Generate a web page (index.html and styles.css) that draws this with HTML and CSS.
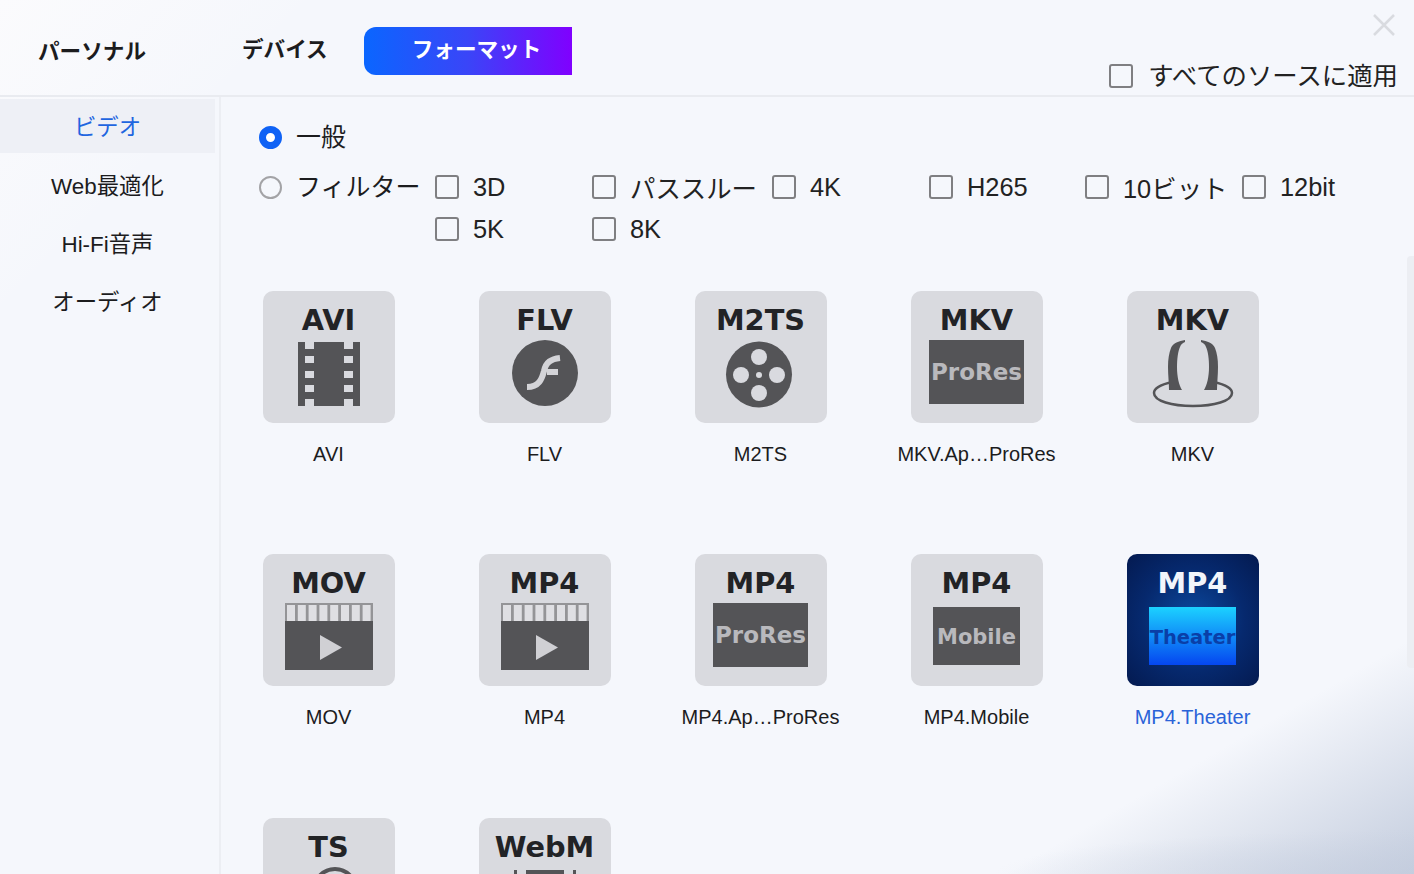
FILE: index.html
```html
<!DOCTYPE html>
<html lang="ja">
<head>
  <meta charset="UTF-8" />
  <meta name="viewport" content="width=device-width, initial-scale=1.0"/>
  <title>フォーマット</title>
  <link rel="stylesheet" href="styles.css">
</head>
<body>
  <div class="app">
    <header class="top">
      <div class="tab tab-personal">パーソナル</div>
      <div class="tab tab-device">デバイス</div>
      <div class="tab tab-format">フォーマット</div>
      <label class="apply-all"><span class="box"></span>すべてのソースに適用</label>
      <svg class="close" width="22" height="22" viewBox="0 0 22 22"><path d="M1 1 L21 21 M21 1 L1 21"/></svg>
    </header>

    <div class="content">
      <nav class="side">
        <div class="side-item active">ビデオ</div>
        <div class="side-item">Web最適化</div>
        <div class="side-item">Hi-Fi音声</div>
        <div class="side-item">オーディオ</div>
      </nav>

      <main class="main">
        <section class="options">
          <div class="radio-row first">
            <span class="radio on"></span>一般
          </div>
          <div class="filter-row">
            <div class="radio-row filter-label">
              <span class="radio"></span>フィルター
            </div>
            <div class="checks">
              <label class="check"><span class="box"></span>3D</label>
              <label class="check"><span class="box"></span>パススルー</label>
              <label class="check"><span class="box"></span>4K</label>
              <label class="check"><span class="box"></span>H265</label>
              <label class="check"><span class="box"></span>10ビット</label>
              <label class="check"><span class="box"></span>12bit</label>
              <label class="check"><span class="box"></span>5K</label>
              <label class="check"><span class="box"></span>8K</label>
            </div>
          </div>
        </section>

        <section class="formats">
          <div class="format">
            <div class="tile">
              <div class="tile-name">AVI</div>
              <svg class="glyph" viewBox="0 49 132 83">
                <rect class="dark" x="35" y="51" width="62" height="64"/>
                <g class="hole">
                  <rect x="42" y="51" width="9" height="7"/><rect x="42" y="65" width="9" height="7"/><rect x="42" y="80" width="9" height="7"/><rect x="42" y="94" width="9" height="7"/><rect x="42" y="108" width="9" height="7"/>
                  <rect x="81" y="51" width="9" height="7"/><rect x="81" y="65" width="9" height="7"/><rect x="81" y="80" width="9" height="7"/><rect x="81" y="94" width="9" height="7"/><rect x="81" y="108" width="9" height="7"/>
                </g>
              </svg>
            </div>
            <div class="format-label">AVI</div>
          </div>

          <div class="format">
            <div class="tile">
              <div class="tile-name">FLV</div>
              <svg class="glyph" viewBox="0 49 132 83">
                <circle class="dark" cx="66" cy="82" r="33"/>
                <path class="flash" d="M48 96 C60 96 63 88 65 80 C67 71 72 68 81 67 M68 81 L79 81"/>
              </svg>
            </div>
            <div class="format-label">FLV</div>
          </div>

          <div class="format">
            <div class="tile">
              <div class="tile-name">M2TS</div>
              <svg class="glyph" viewBox="0 49 132 83">
                <circle class="dark" cx="64" cy="83.500" r="33"/>
                <g class="hole">
                  <circle cx="64" cy="66" r="8"/><circle cx="64" cy="102" r="8"/><circle cx="46" cy="84" r="8"/><circle cx="82" cy="84" r="8"/><circle cx="64" cy="84" r="3"/>
                </g>
              </svg>
            </div>
            <div class="format-label">M2TS</div>
          </div>

          <div class="format">
            <div class="tile">
              <div class="tile-name">MKV</div>
              <svg class="glyph" viewBox="0 49 132 83">
                <rect class="dark" x="18" y="49" width="95" height="64"/>
                <text class="glyph-text" x="65.500" y="89" font-size="23">ProRes</text>
              </svg>
            </div>
            <div class="format-label">MKV.Ap…ProRes</div>
          </div>

          <div class="format">
            <div class="tile">
              <div class="tile-name">MKV</div>
              <svg class="glyph" viewBox="0 49 132 83">
                <path class="ring" d="M45 91 C32 94 27 98 27 102 C27 110 45 115 66 115 C87 115 105 110 105 102 C105 98 100 94 87 91"/>
                <path class="dark" d="M58 49 C52 50 46 52 44 57 C42 62 41 68 41 76 C41 84 42 92 42 99 L55 99 C52 94 50 86 50 76 C50 68 51 60 53 56 C54 53 56 52 58 51 Z"/>
                <path class="dark" d="M74 49 C80 50 86 52 88 57 C90 62 91 68 91 76 C91 84 90 92 90 99 L77 99 C80 94 82 86 82 76 C82 68 81 60 79 56 C78 53 76 52 74 51 Z"/>
              </svg>
            </div>
            <div class="format-label">MKV</div>
          </div>

          <div class="format">
            <div class="tile">
              <div class="tile-name">MOV</div>
              <svg class="glyph" viewBox="0 49 132 83">
                <rect class="dark" x="22" y="49" width="88" height="67"/>
                <rect class="strip-bg" x="22" y="49" width="88" height="18"/>
                <line class="strip" x1="24" y1="59" x2="108" y2="59"/>
                <polygon class="play" points="57,81 79,93.500 57,106"/>
              </svg>
            </div>
            <div class="format-label">MOV</div>
          </div>

          <div class="format">
            <div class="tile">
              <div class="tile-name">MP4</div>
              <svg class="glyph" viewBox="0 49 132 83">
                <rect class="dark" x="22" y="49" width="88" height="67"/>
                <rect class="strip-bg" x="22" y="49" width="88" height="18"/>
                <line class="strip" x1="24" y1="59" x2="108" y2="59"/>
                <polygon class="play" points="57,81 79,93.500 57,106"/>
              </svg>
            </div>
            <div class="format-label">MP4</div>
          </div>

          <div class="format">
            <div class="tile">
              <div class="tile-name">MP4</div>
              <svg class="glyph" viewBox="0 49 132 83">
                <rect class="dark" x="18" y="49" width="95" height="64"/>
                <text class="glyph-text" x="65.500" y="89" font-size="23">ProRes</text>
              </svg>
            </div>
            <div class="format-label">MP4.Ap…ProRes</div>
          </div>

          <div class="format">
            <div class="tile">
              <div class="tile-name">MP4</div>
              <svg class="glyph" viewBox="0 49 132 83">
                <rect class="dark" x="22" y="53" width="87" height="58"/>
                <text class="glyph-text" x="65.500" y="90" font-size="21">Mobile</text>
              </svg>
            </div>
            <div class="format-label">MP4.Mobile</div>
          </div>

          <div class="format selected">
            <div class="tile">
              <div class="tile-name">MP4</div>
              <svg class="glyph" viewBox="0 49 132 83">
                <defs>
                  <linearGradient id="theaterFill" x1="0" y1="0" x2="0" y2="1">
                    <stop offset="0" stop-color="#1cd2ff"/>
                    <stop offset="1" stop-color="#0546f0"/>
                  </linearGradient>
                </defs>
                <rect fill="url(#theaterFill)" x="22" y="53" width="87" height="58"/>
                <text class="glyph-text theater" x="65.500" y="90" font-size="19.500">Theater</text>
              </svg>
            </div>
            <div class="format-label">MP4.Theater</div>
          </div>

          <div class="format">
            <div class="tile">
              <div class="tile-name">TS</div>
              <svg class="glyph" viewBox="0 49 132 83">
                <circle class="ring thick" cx="72" cy="72" r="21"/>
              </svg>
            </div>
          </div>

          <div class="format">
            <div class="tile">
              <div class="tile-name">WebM</div>
              <svg class="glyph" viewBox="0 49 132 83">
                <rect class="dark" x="35" y="52" width="62" height="64"/>
                <g class="hole">
                  <rect x="38" y="52" width="9" height="7"/><rect x="85" y="52" width="9" height="7"/>
                </g>
              </svg>
            </div>
          </div>
        </section>
      </main>
    </div>
  </div>
  <div class="scrollbar"></div>
</body>
</html>
```

FILE: styles.css
```css
* {
  box-sizing: border-box;
}
html, body {
  margin: 0;
  height: 100%;
  overflow: hidden;
}
body {
  font-family: "Liberation Sans", "Noto Sans CJK JP", sans-serif;
  color: #1c1c1e;
  background:
    radial-gradient(ellipse 420px 44px at 100% 100%, rgba(196,205,222,0.5), rgba(196,205,222,0)),
    linear-gradient(150deg, rgba(198,207,223,0) 86%, #c4cdde 100%),
    linear-gradient(135deg, #fbfbfd 0, rgba(251,251,253,0) 14%),
    #f5f7fc;
}
.app {
  display: flex;
  flex-direction: column;
  height: 874px;
  overflow: hidden;
}

/* top bar */
.top {
  position: relative;
  display: flex;
  align-items: flex-start;
  flex: none;
  height: 97px;
  padding-left: 38px;
  border-bottom: 2px solid #e9ebf0;
}
.tab {
  font-size: 21.600px;
  font-weight: 700;
  color: #1c1c1e;
  line-height: 32px;
}
.tab-personal {
  margin-top: 36px;
}
.tab-device {
  margin-top: 34px;
  margin-left: 96px;
}
.tab-format {
  margin-top: 27px;
  margin-left: 36px;
  width: 208px;
  height: 48px;
  padding-left: 48px;
  line-height: 46px;
  color: #fff;
  border-radius: 12px 0 0 12px;
  background: linear-gradient(90deg, #0a66ff 0%, #3a45f8 50%, #8000ff 100%);
}
.apply-all {
  display: flex;
  align-items: center;
  gap: 15px;
  margin-left: auto;
  margin-top: 60px;
  margin-right: 16px;
  font-size: 25.400px;
  line-height: 32px;
  color: #222;
}
.close {
  position: absolute;
  top: 14px;
  right: 19px;
}
.close path {
  fill: none;
  stroke: #d9dbe0;
  stroke-width: 2.500;
}
.box {
  flex: none;
  width: 24px;
  height: 24px;
  border: 2px solid #7f7f82;
  border-radius: 3px;
}

/* left menu */
.content {
  display: flex;
  flex: 1;
  min-height: 0;
}
.side {
  flex: none;
  width: 221px;
  padding: 2px 4px 0 0;
  border-right: 2px solid #eceef3;
  display: flex;
  flex-direction: column;
  gap: 4px;
}
.side-item {
  height: 54px;
  line-height: 56px;
  text-align: center;
  font-size: 22.400px;
  color: #1c1c1e;
}
.side-item.active {
  margin-bottom: 2px;
  line-height: 58px;
  color: #1f66e0;
  background: #eef0f6;
}

/* radio and checkbox options */
.main {
  flex: 1;
  min-width: 0;
}
.options {
  padding: 20px 0 0 38px;
}
.radio-row {
  display: flex;
  align-items: center;
  gap: 14px;
  height: 40px;
  font-size: 25px;
  line-height: 38px;
}
.radio {
  flex: none;
  width: 23px;
  height: 23px;
  border: 2px solid #a3a3a6;
  border-radius: 50%;
}
.radio.on {
  border: 7px solid #0f62f5;
  background: #fff;
}
.filter-row {
  display: flex;
  margin-top: 9px;
}
.filter-label {
  width: 176px;
  height: 42px;
  align-self: flex-start;
}
.checks {
  display: grid;
  grid-template-columns: 157px 180px 157px 156px 157px auto;
  grid-auto-rows: 42px;
}
.check {
  display: flex;
  align-items: center;
  gap: 14px;
  font-size: 25.400px;
  white-space: nowrap;
  color: #222;
}

/* format tiles */
.formats {
  display: grid;
  grid-template-columns: repeat(5, 216px);
  grid-auto-rows: 263.250px;
  margin-top: 41px;
}
.format {
  display: flex;
  flex-direction: column;
  align-items: center;
}
.tile {
  width: 132px;
  height: 132px;
  flex: none;
  border-radius: 10px;
  background: #d9dadf;
}
.tile-name {
  height: 49px;
  padding-right: 1px;
  line-height: 58px;
  text-align: center;
  font-family: "DejaVu Sans", sans-serif;
  font-weight: 700;
  font-size: 28.800px;
  color: #222326;
}
.glyph {
  display: block;
  width: 132px;
  height: 83px;
}
.format-label {
  margin-top: 19px;
  padding-right: 1px;
  font-size: 20px;
  line-height: 24px;
  white-space: nowrap;
  color: #1c1c1e;
}
.selected .tile {
  background: radial-gradient(circle at 50% 50%, #0b4aa0 0%, #06296e 55%, #041a50 100%);
}
.selected .tile-name {
  color: #f2f5fb;
}
.selected .format-label {
  color: #2a63d8;
}

/* svg parts */
.dark {
  fill: #545457;
}
.hole {
  fill: #d9dadf;
}
.flash {
  fill: none;
  stroke: #d3d3d7;
  stroke-width: 6;
}
.ring {
  fill: none;
  stroke: #545457;
  stroke-width: 2.500;
}
.ring.thick {
  stroke-width: 4;
}
.strip-bg {
  fill: #949497;
}
.strip {
  stroke: #dfdfe3;
  stroke-width: 16;
  stroke-dasharray: 8 2.800;
}
.play {
  fill: #d0d0d4;
}
.glyph-text {
  font-family: "DejaVu Sans", sans-serif;
  font-weight: 700;
  text-anchor: middle;
  fill: #b9b9bd;
}
.glyph-text.theater {
  fill: #0a3fa8;
}

.scrollbar {
  position: absolute;
  top: 256px;
  right: 0;
  width: 7px;
  height: 412px;
  border-radius: 4px 0 0 4px;
  background: #eceef3;
}
```
